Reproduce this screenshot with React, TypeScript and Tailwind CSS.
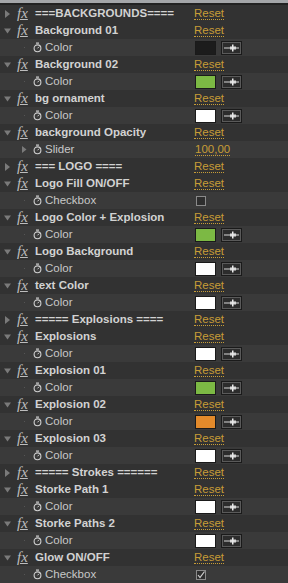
type Row =
  | { kind: 'fx'; name: string; open: boolean }
  | { kind: 'color'; color: string }
  | { kind: 'slider'; value: string }
  | { kind: 'check'; checked: boolean };

const ROWS: Row[] = [
  { kind: 'fx', name: '===BACKGROUNDS====', open: false },
  { kind: 'fx', name: 'Background 01', open: true },
  { kind: 'color', color: '#1c1c1c' },
  { kind: 'fx', name: 'Background 02', open: true },
  { kind: 'color', color: '#7cb944' },
  { kind: 'fx', name: 'bg ornament', open: true },
  { kind: 'color', color: '#ffffff' },
  { kind: 'fx', name: 'background Opacity', open: true },
  { kind: 'slider', value: '100,00' },
  { kind: 'fx', name: '=== LOGO ====', open: false },
  { kind: 'fx', name: 'Logo Fill ON/OFF', open: true },
  { kind: 'check', checked: false },
  { kind: 'fx', name: 'Logo Color + Explosion', open: true },
  { kind: 'color', color: '#7cb944' },
  { kind: 'fx', name: 'Logo Background', open: true },
  { kind: 'color', color: '#ffffff' },
  { kind: 'fx', name: 'text Color', open: true },
  { kind: 'color', color: '#ffffff' },
  { kind: 'fx', name: '===== Explosions ====', open: false },
  { kind: 'fx', name: 'Explosions', open: true },
  { kind: 'color', color: '#ffffff' },
  { kind: 'fx', name: 'Explosion 01', open: true },
  { kind: 'color', color: '#7cb944' },
  { kind: 'fx', name: 'Explosion 02', open: true },
  { kind: 'color', color: '#e38a2b' },
  { kind: 'fx', name: 'Explosion 03', open: true },
  { kind: 'color', color: '#ffffff' },
  { kind: 'fx', name: '===== Strokes ======', open: false },
  { kind: 'fx', name: 'Storke Path 1', open: true },
  { kind: 'color', color: '#ffffff' },
  { kind: 'fx', name: 'Storke Paths 2', open: true },
  { kind: 'color', color: '#ffffff' },
  { kind: 'fx', name: 'Glow ON/OFF', open: true },
  { kind: 'check', checked: true },
];

function Twirl({ open }: { open: boolean }) {
  return (
    <svg width="8" height="8" viewBox="0 0 8 8">
      {open ? (
        <polygon points="0,1.5 7,1.5 3.5,6.5" fill="#7a7a7a" />
      ) : (
        <polygon points="1,0 6,4 1,8" fill="#7a7a7a" />
      )}
    </svg>
  );
}

function Stopwatch() {
  return (
    <svg width="9" height="11" viewBox="0 0 9 11">
      <rect x="3" y="0.5" width="3" height="1.2" fill="#d0d0d0" />
      <circle cx="4.5" cy="6.3" r="3.4" fill="none" stroke="#d0d0d0" strokeWidth="1.1" />
      <line x1="4.5" y1="6.3" x2="6.2" y2="4.6" stroke="#d0d0d0" strokeWidth="1" />
    </svg>
  );
}

function Reset() {
  return (
    <span className="text-[11.5px] leading-[12px] text-[#c79d37] border-b border-dotted border-[#c79d37]">
      Reset
    </span>
  );
}

function Eyedropper() {
  return (
    <div className="w-[21px] h-[14px] border border-[#1a1a1a] bg-[#2c2c2c] shadow-[inset_0_0_0_1px_#5a5a5a] flex items-center justify-center">
      <svg width="15" height="8" viewBox="0 0 15 8">
        <rect x="0" y="3.5" width="15" height="1" fill="#d8d8d8" />
        <rect x="6" y="2.5" width="6" height="3" fill="#d8d8d8" />
        <rect x="8" y="0.5" width="1.5" height="7" fill="#e8e8e8" />
      </svg>
    </div>
  );
}

function FxRow({ name, open }: { name: string; open: boolean }) {
  return (
    <div className="flex h-[17px] items-center bg-[#323232]">
      <div className="w-[194px] flex items-center pl-[4px]">
        <span className="w-[13px] flex items-center">
          <Twirl open={open} />
        </span>
        <span className="w-[18px] font-['Liberation_Serif',serif] italic text-[15px] leading-[13px] text-[#bdbdbd] underline underline-offset-[1px]">
          fx
        </span>
        <span className="font-bold text-[11.5px] text-[#d2d2d2] whitespace-nowrap">{name}</span>
      </div>
      <Reset />
    </div>
  );
}

function PropRow({ row }: { row: Exclude<Row, { kind: 'fx' }> }) {
  const label = row.kind === 'color' ? 'Color' : row.kind === 'slider' ? 'Slider' : 'Checkbox';
  return (
    <div className="flex h-[17px] items-center bg-[#3a3a3a]">
      <div className="w-[194px] flex items-center pl-[22px]">
        <span className="w-[11px] flex items-center">
          {row.kind === 'slider' ? (
            <svg width="5" height="7" viewBox="0 0 5 7">
              <polygon points="0,0 4.5,3.5 0,7" fill="#7a7a7a" />
            </svg>
          ) : (
            <span className="ml-[2px] w-[1px] h-[1px] bg-[#555]" />
          )}
        </span>
        <span className="w-[12px] flex items-center">
          <Stopwatch />
        </span>
        <span className="text-[11.5px] text-[#c8c8c8]">{label}</span>
      </div>
      {row.kind === 'color' && (
        <div className="flex items-center gap-[5px] ml-[1px]">
          <div className="w-[21px] h-[14px] border border-[#1a1a1a]" style={{ backgroundColor: row.color }} />
          <Eyedropper />
        </div>
      )}
      {row.kind === 'slider' && (
        <span className="ml-[1px] text-[11.5px] leading-[12px] text-[#c79d37] border-b border-dotted border-[#c79d37]">
          {row.value}
        </span>
      )}
      {row.kind === 'check' && (
        <div className="ml-[2px] w-[10px] h-[10px] border border-[#8a8a8a] bg-[#2e2e2e] flex items-center justify-center">
          {row.checked && (
            <svg width="8" height="8" viewBox="0 0 8 8">
              <polyline points="1,4 3,6.5 7.5,0.5" fill="none" stroke="#d0d0d0" strokeWidth="1.2" />
            </svg>
          )}
        </div>
      )}
    </div>
  );
}

export default function App() {
  return (
    <div className="w-[288px] h-[583px] overflow-hidden bg-[#3a3a3a] font-['Liberation_Sans',Arial,sans-serif]">
      <div className="h-[3px] bg-[#a4a6a9]" />
      <div className="h-[2px] bg-[#222222]" />
      {ROWS.map((row, i) =>
        row.kind === 'fx' ? <FxRow key={i} name={row.name} open={row.open} /> : <PropRow key={i} row={row} />
      )}
    </div>
  );
}
